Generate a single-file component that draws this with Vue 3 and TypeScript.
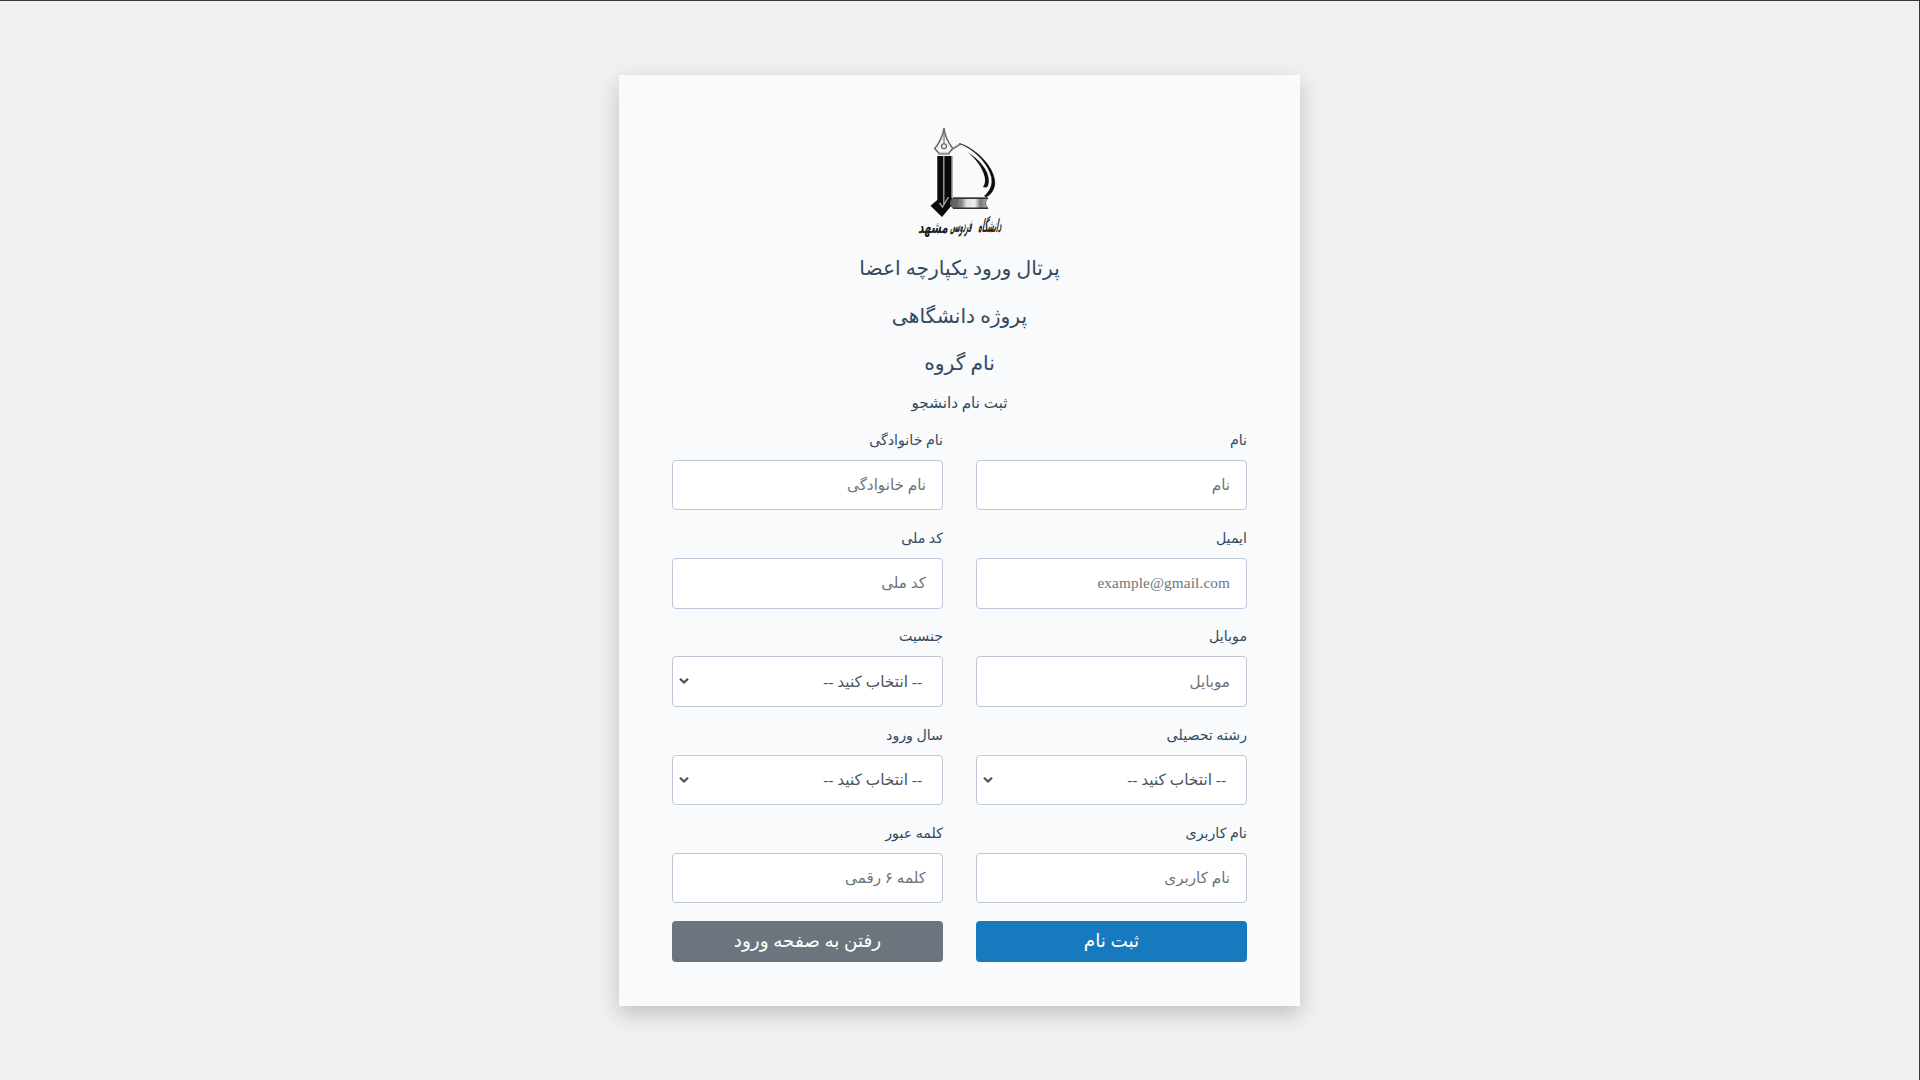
<script setup lang="ts">
interface Field {
  id: string
  label: string
  type: 'text' | 'email' | 'password' | 'select'
  placeholder: string
}

const titles: string[] = ['پرتال ورود یکپارچه اعضا', 'پروژه دانشگاهی', 'نام گروه']

const fields: Field[] = [
  { id: 'first-name', label: 'نام', type: 'text', placeholder: 'نام' },
  { id: 'last-name', label: 'نام خانوادگی', type: 'text', placeholder: 'نام خانوادگی' },
  { id: 'email', label: 'ایمیل', type: 'email', placeholder: 'example@gmail.com' },
  { id: 'national-code', label: 'کد ملی', type: 'text', placeholder: 'کد ملی' },
  { id: 'mobile', label: 'موبایل', type: 'text', placeholder: 'موبایل' },
  { id: 'gender', label: 'جنسیت', type: 'select', placeholder: '-- انتخاب کنید --' },
  { id: 'major', label: 'رشته تحصیلی', type: 'select', placeholder: '-- انتخاب کنید --' },
  { id: 'entry-year', label: 'سال ورود', type: 'select', placeholder: '-- انتخاب کنید --' },
  { id: 'username', label: 'نام کاربری', type: 'text', placeholder: 'نام کاربری' },
  { id: 'password', label: 'کلمه عبور', type: 'password', placeholder: 'کلمه ۶ رقمی' },
]
</script>

<template>
  <main class="page" dir="rtl">
    <form class="card" @submit.prevent>
      <svg class="logo" viewBox="0 0 120 130" width="120" height="130">
        <defs>
          <linearGradient id="book" x1="0" x2="1">
            <stop offset="0" stop-color="#555" />
            <stop offset=".3" stop-color="#888" />
            <stop offset=".42" stop-color="#ddd" />
            <stop offset=".65" stop-color="#eee" />
            <stop offset=".8" stop-color="#777" />
            <stop offset="1" stop-color="#bbb" />
          </linearGradient>
        </defs>
        <path d="M44 13C43.300 20 39 29 34.700 33.500L39.200 38.500H48.500L52.800 33.500C48.500 28 44.700 20 44 13Z" fill="#f5f6f7" stroke="#666" stroke-width="1.500" />
        <path d="M44 13V28.500" stroke="#777" stroke-width="1.200" />
        <circle cx="44" cy="31.300" r="2.500" fill="#eee" stroke="#555" stroke-width="1.100" />
        <path d="M38 39H50" stroke="#999" stroke-width="1.800" />
        <path d="M37.300 41H52.300V83L52 90L42 102L30.500 90.700L37.300 85Z" fill="#090909" />
        <path d="M43.800 41V89M39.500 88L42.500 92L48.500 82" fill="none" stroke="#aaa" stroke-width="1.300" />
        <path d="M51.500 41V83" stroke="#777" stroke-width="1" />
        <path d="M52.500 34L60.500 29" fill="none" stroke="#777" stroke-width="2" />
        <path d="M59.500 28.500C75 33 94 51 94.800 67C95 75 90 80.500 85.800 82L84.500 81C90 76 93 70 91.500 62C88 48 74 34 59.500 28.500Z" fill="#080808" stroke="#080808" stroke-width=".5" />
        <path d="M66 36C79 44 89 55 88.800 66Q88.500 72 86 72.500L83 72Q87 67 83.500 58C80 49 74 42 66 36Z" fill="#111" />
        <path d="M53 83H88Q83 88 88 93.500H53Q50.500 91 50.500 88Q50.500 85 53 83Z" fill="url(#book)" stroke="#666" stroke-width="1" />
        <path d="M53 83.200H88M53 93.300H88" stroke="#333" stroke-width="1.400" />
        <path d="M57.500 84Q54.500 88 57.500 93" fill="none" stroke="#555" stroke-width="1" />
        <g class="logo-text">
          <text transform="translate(78 116.500) skewX(-12) scale(.5 1.500)">دانشگاه</text>
          <text transform="translate(50 117) skewX(-12) scale(.4 1.500)">فردوسی</text>
          <text transform="translate(18 118) skewX(-12) scale(.86 1.400)">مشهد</text>
        </g>
      </svg>

      <h1 v-for="title in titles" :key="title" class="title">{{ title }}</h1>
      <h2 class="subtitle">ثبت نام دانشجو</h2>

      <div class="grid">
        <div v-for="field in fields" :key="field.id" class="field">
          <label :for="field.id">{{ field.label }}</label>
          <div v-if="field.type === 'select'" class="select-wrap">
            <select :id="field.id" class="control">
              <option>{{ field.placeholder }}</option>
            </select>
            <svg class="arrow" viewBox="0 0 10 6" width="10" height="6">
              <path d="M1 .8L5 4.500L9 .8" fill="none" stroke="#495057" stroke-width="2.200" />
            </svg>
          </div>
          <input v-else :id="field.id" class="control" :type="field.type" :placeholder="field.placeholder" />
        </div>
        <button class="btn primary" type="submit">ثبت نام</button>
        <button class="btn secondary" type="button">رفتن به صفحه ورود</button>
      </div>
    </form>
  </main>
</template>

<style>
body {
  margin: 0;
  background: #f0f0f0;
}
</style>

<style scoped>
.page {
  box-sizing: border-box;
  height: 1080px;
  padding-top: 74px;
  border-top: 1px solid #35353a;
  border-right: 1px solid #35353a;
  background: #f0f0f0;
  font-family: "Liberation Serif", "DejaVu Sans", serif;
  letter-spacing: 0.01em;
  color: #34495e;
}

.card {
  box-sizing: border-box;
  width: 681px;
  height: 931px;
  margin: 0 auto;
  padding: 40px 53px 0;
  background: #f8fafc;
  box-shadow: 0 8px 20px rgba(0, 0, 0, 0.2);
}

.logo {
  display: block;
  margin: 0 auto;
  overflow: visible;
}

.logo-text {
  direction: ltr;
  font-size: 12px;
  font-weight: bold;
  letter-spacing: 0;
  fill: #222;
}

.title {
  height: 47.700px;
  margin: 0;
  font-size: 20.250px;
  font-weight: 400;
  line-height: 47.700px;
  text-align: center;
}

.subtitle {
  height: 32px;
  margin: 0;
  font-size: 15.200px;
  font-weight: 400;
  line-height: 30px;
  text-align: center;
}

.grid {
  display: grid;
  grid-template-columns: 271px 271px;
  justify-content: space-between;
}

.field {
  display: flex;
  flex-direction: column;
  height: 98.200px;
}

label {
  height: 40px;
  font-size: 14.200px;
  line-height: 40.600px;
}

.select-wrap {
  position: relative;
}

.arrow {
  position: absolute;
  left: 7px;
  top: 22px;
}

.control {
  box-sizing: border-box;
  display: block;
  width: 100%;
  height: 50.400px;
  padding: 6px 16px;
  border: 1px solid #bfc7d9;
  border-radius: 4px;
  background-color: #fff;
  color: #495057;
  font: 15.200px "Liberation Serif", "DejaVu Sans", serif;
  letter-spacing: 0.01em;
  text-align: right;
}

select.control {
  padding-right: 20px;
  font-size: 15.350px;
  letter-spacing: 0.3px;
  appearance: none;
}

.control::placeholder {
  color: #6c757d;
}

.btn {
  height: 41px;
  margin-top: 10px;
  padding: 0 0 2px;
  border: 0;
  border-radius: 4px;
  color: #fff;
  font: 18.400px "Liberation Serif", "DejaVu Sans", serif;
  letter-spacing: 0.3px;
}

.primary {
  background: #177abf;
}

.secondary {
  background: #6c757d;
}
</style>
